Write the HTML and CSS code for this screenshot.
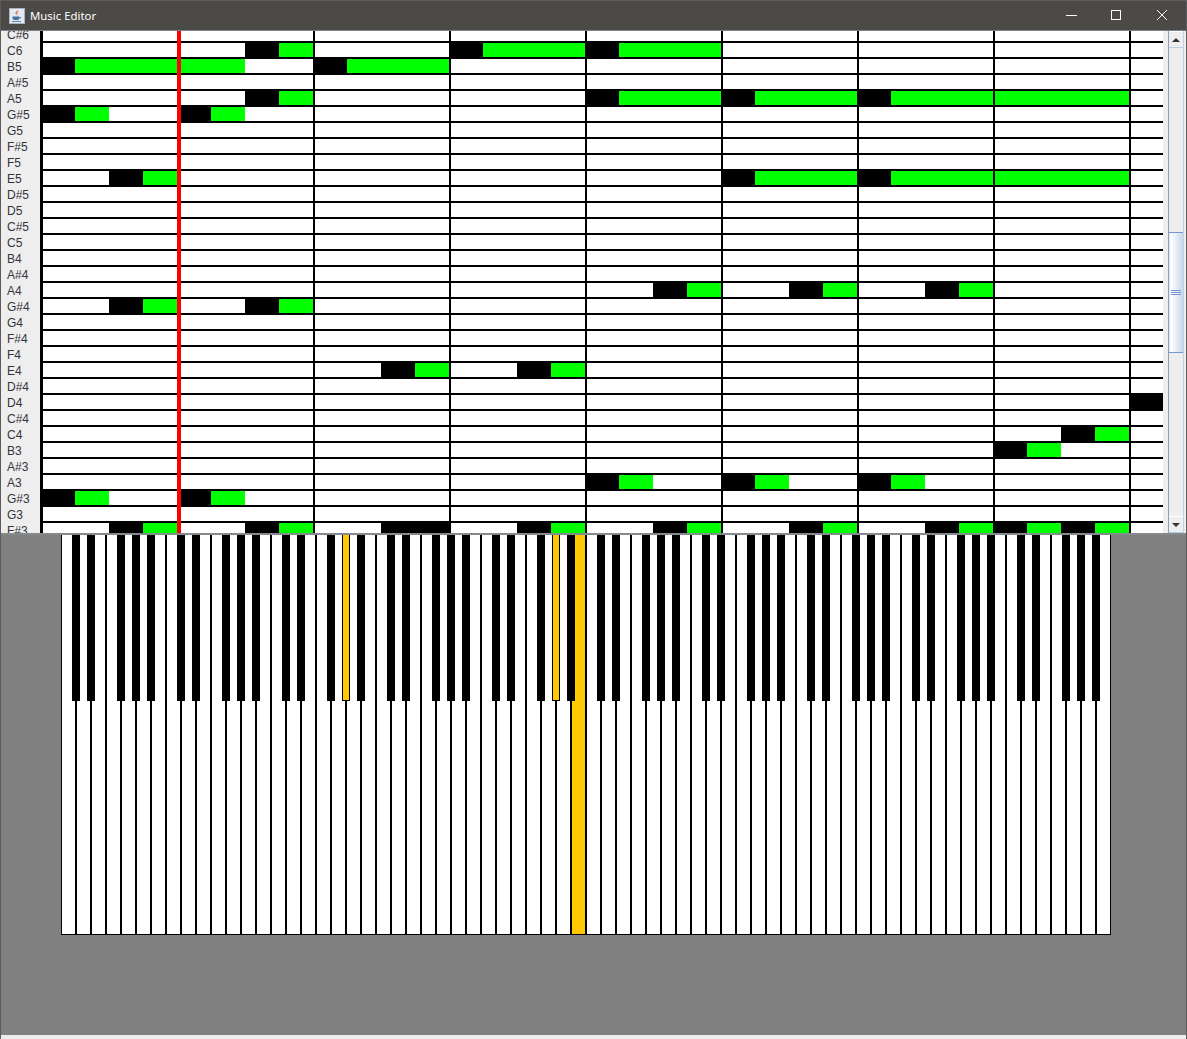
FILE: index.html
```html
<!doctype html>
<html>
<head>
	<meta charset="utf-8" />
	<title>Music Editor</title>
	<link rel="stylesheet" href="styles.css">
</head>
<body>
	<div class="window">
		<div class="titlebar">
			<svg class="java-icon" width="16" height="16" viewBox="0 0 16 16">
				<rect x="0.5" y="0.5" width="15" height="15" fill="#e4e9f0" stroke="#a9b4c2" />
				<path d="M8.5 2c1.5 1.5-2 3-.8 4.6.4.5.9.8.9.8-1.6-1-2.6-1.800-1.900-3.100C7.200 3.300 8.800 3 8.500 2zM10 4.500c-1 .7-1.800 1.300-1.100 2.400-.7-.5-1-1.700 1.100-2.400z" fill="#d8431f" />
				<path d="M3.500 8.500h7v1.600c0 1.200-1 1.900-2 1.900h-3c-1 0-2-.7-2-1.900z" fill="#41719f" />
				<path d="M10.500 9h1.500v1.500h-1.500M3 13h9v1h-9z" fill="#5b86ad" />
			</svg>
			<span class="title">Music Editor</span>
			<div class="controls">
				<svg class="ctl" width="45" height="31" viewBox="0 0 45 31"><path d="M14 15.500h11" stroke="#fff" fill="none" /></svg>
				<svg class="ctl" width="45" height="31" viewBox="0 0 45 31"><rect x="14.500" y="10.500" width="9" height="9" stroke="#fff" fill="none" /></svg>
				<svg class="ctl" width="45" height="31" viewBox="0 0 45 31"><path d="M15 10l10 10M25 10l-10 10" stroke="#fff" fill="none" /></svg>
			</div>
		</div>

		<div class="score">
			<div class="pitches">
				<div>C#6</div><div>C6</div><div>B5</div><div>A#5</div><div>A5</div><div>G#5</div><div>G5</div><div>F#5</div>
				<div>F5</div><div>E5</div><div>D#5</div><div>D5</div><div>C#5</div><div>C5</div><div>B4</div><div>A#4</div>
				<div>A4</div><div>G#4</div><div>G4</div><div>F#4</div><div>F4</div><div>E4</div><div>D#4</div><div>D4</div>
				<div>C#4</div><div>C4</div><div>B3</div><div>A#3</div><div>A3</div><div>G#3</div><div>G3</div><div>F#3</div>
			</div>
			<svg id="grid" class="grid" width="1123" height="502"></svg>
			<div class="scrollbar">
				<div class="arrow-btn"><span class="tri-up"></span></div>
				<div class="track upper"></div>
				<div class="thumb"><span class="grip"></span></div>
				<div class="track"></div>
				<div class="arrow-btn"><span class="tri-down"></span></div>
			</div>
		</div>

		<div class="stage">
			<svg id="piano" class="piano" width="1051" height="400"></svg>
		</div>
		<div class="statusbar"></div>
	</div>
	<script src="script.js"></script>
</body>
</html>
```

FILE: styles.css
```css
* { box-sizing: border-box; }
body { margin: 0; background: #eeeeee; }
.window { width: 1187px; height: 1039px; display: flex; flex-direction: column; border-left: 1px solid #5c5c5c; border-right: 1px solid #5c5c5c; overflow: hidden; }

.titlebar { height: 31px; margin: 0 -1px; padding-left: 9px; flex: none; display: flex; align-items: center; gap: 5px; background: #4c4a46; border-top: 1px solid #5f5e5b; border-bottom: 1px solid #7d8388; font-family: 'Noto Sans', sans-serif; font-size: 11.4px; color: #ffffff; }
.java-icon { flex: none; }
.title { padding-bottom: 1px; }
.controls { margin-left: auto; margin-top: -1px; display: flex; }
.ctl { display: block; }

.score { height: 502px; flex: none; display: flex; overflow: hidden; background: #eeeeee; }
.pitches { width: 39px; flex: none; margin-top: -4px; font-family: 'Liberation Sans', Arial, sans-serif; font-size: 12px; color: #33343c; }
.pitches div { height: 16px; line-height: 16px; padding-left: 6px; }
.grid { flex: none; display: block; shape-rendering: crispEdges; }

.scrollbar { width: 16px; margin-left: 5px; flex: none; display: flex; flex-direction: column; background: #eeeeee; border-left: 1px solid #8c9fb5; border-right: 1px solid #c9d2dc; }
.arrow-btn { height: 17px; flex: none; display: flex; align-items: center; justify-content: center; border-bottom: 1px solid #b8cfe5; border-top: 1px solid #ffffff; }
.track { flex: 1; }
.track.upper { flex: none; height: 184px; }
.thumb { height: 121px; flex: none; display: flex; align-items: center; justify-content: center; background: linear-gradient(to right, #d6e3f3, #ffffff 15%, #c5d8ef); border-top: 1px solid #7595d4; border-bottom: 1px solid #7595d4; }
.grip { width: 10px; height: 5px; border-top: 1px solid #7595d4; border-bottom: 1px solid #7595d4; }
.grip::after { content: ""; display: block; height: 1px; margin-top: 1px; background: #7595d4; }
.tri-up { border-left: 4px solid transparent; border-right: 4px solid transparent; border-bottom: 4px solid #333333; }
.tri-down { border-left: 4px solid transparent; border-right: 4px solid transparent; border-top: 4px solid #333333; }

.stage { flex: 1; padding-left: 59px; background: #808080; border-top: 2px solid #858a8f; }
.piano { display: block; shape-rendering: crispEdges; }
.statusbar { height: 4px; flex: none; margin: 0 -1px; background: #eeeeee; }
```

FILE: script.js
```js
var BEAT = 34, ROW = 16, SVGNS = 'http://www.w3.org/2000/svg';
var GREEN = '#00ff00', ORANGE = '#ffc800';

// row, start beat, end beat. row 0 is C6
var notes = [
	[0,6,8],[0,12,16],[0,16,20],
	[1,0,6],[1,8,12],
	[3,6,8],[3,16,20],[3,20,24],[3,24,28],
	[4,0,2],[4,4,6],
	[8,2,4],[8,20,24],[8,24,28],
	[15,18,20],[15,22,24],[15,26,28],
	[16,2,4],[16,6,8],
	[20,10,12],[20,14,16],
	[22,32,33],
	[24,30,32],
	[25,28,30],
	[27,16,18],[27,20,22],[27,24,26],
	[28,0,2],[28,4,6],
	[30,2,4],[30,6,8],[30,10,11],[30,11,12],[30,14,16],[30,18,20],[30,22,24],[30,26,28],[30,28,30],[30,30,32]
];
// held over the bar line, no note head
var held = [[3,28,32],[8,28,32]];

function rect(svg, x, y, w, h, fill) {
	var r = document.createElementNS(SVGNS, 'rect');
	r.setAttribute('x', x);
	r.setAttribute('y', y);
	r.setAttribute('width', w);
	r.setAttribute('height', h);
	r.setAttribute('fill', fill);
	svg.appendChild(r);
}

function drawGrid() {
	var svg = document.getElementById('grid');
	var width = 1123, height = 502, i;
	rect(svg, 0, 0, width, height, '#ffffff');
	function beatX(b) { return 1 + b * BEAT; }
	function rowY(r) { return 12 + r * ROW; }
	notes.forEach(function(n) {
		rect(svg, beatX(n[1]), rowY(n[0]), BEAT, 14, '#000000');
		rect(svg, beatX(n[1] + 1), rowY(n[0]), (n[2] - n[1] - 1) * BEAT, 14, GREEN);
	});
	held.forEach(function(n) {
		rect(svg, beatX(n[1]), rowY(n[0]), (n[2] - n[1]) * BEAT, 14, GREEN);
	});
	for (i = 0; i < 31; i++) rect(svg, 0, 10 + i * ROW, width, 2, '#000000');
	rect(svg, 0, 0, 3, height, '#000000');
	for (i = 8; i <= 32; i += 4) rect(svg, beatX(i), 0, 2, height, '#000000');
	rect(svg, beatX(4), 0, 4, height, '#ff0000');
}

function drawPiano() {
	var svg = document.getElementById('piano');
	var KEY = 15, KEYS = 70, TOP = 166, i;
	rect(svg, 1, 0, 1050, 399, '#ffffff');
	// white key 34 is sounding
	rect(svg, 1 + 34 * KEY, 0, KEY, 399, ORANGE);
	for (i = 1; i < KEYS; i++) rect(svg, i * KEY, 0, 2, 399, '#000000');
	rect(svg, 1, 0, 1, 400, '#000000');
	rect(svg, 1050, 0, 1, 400, '#000000');
	rect(svg, 1, 399, 1050, 1, '#000000');
	// black keys sit on the boundary left of D, E, G, A, B
	var sounding = { 19: 1, 33: 1 };
	for (i = 1; i < KEYS; i++) {
		var d = i % 7;
		if (d == 0 || d == 3) continue;
		rect(svg, 1 + i * KEY - 4, 0, 8, TOP, '#000000');
		if (sounding[i]) rect(svg, 1 + i * KEY - 3, 0, 6, TOP - 1, ORANGE);
	}
}

drawGrid();
drawPiano();
```
